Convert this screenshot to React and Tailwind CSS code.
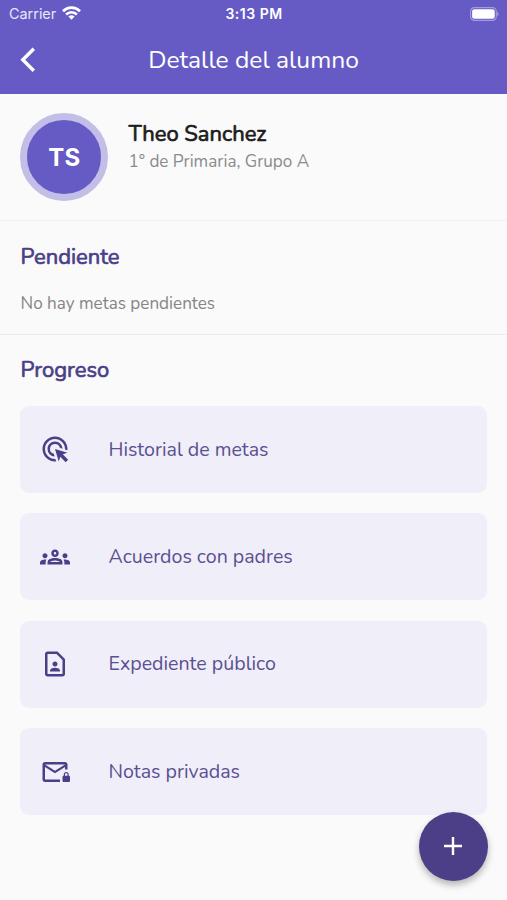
import { MdAdsClick, MdOutlineGroups, MdOutlineContactPage, MdOutlineMailLock } from "react-icons/md";

const items = [
  { label: "Historial de metas", Icon: MdAdsClick, iconClass: "mb-px" },
  { label: "Acuerdos con padres", Icon: MdOutlineGroups, iconClass: "" },
  { label: "Expediente público", Icon: MdOutlineContactPage, iconClass: "" },
  { label: "Notas privadas", Icon: MdOutlineMailLock, iconClass: "" },
];

function StatusBar() {
  return (
    <div className="grid h-[27px] grid-cols-3 items-center pl-[9px] pr-[8px] font-['Inter','Liberation_Sans',sans-serif] text-white">
      <div className="flex items-center gap-[6px] pt-px text-[14.4px] text-white/85">
        <span>Carrier</span>
        <svg className="mb-[2px] h-[14px] w-[19px]" viewBox="0 0 19 14" fill="none" stroke="white" strokeWidth="2.7">
          <path d="M1 5.2C5.8.5 13.2.5 18 5.2" />
          <path d="M4.1 8.4c3.1-2.9 7.7-2.9 10.8 0" />
          <path d="M9.5 13.7 6.4 10.5c1.8-1.6 4.4-1.6 6.2 0Z" fill="white" stroke="none" />
        </svg>
      </div>
      <span className="text-center text-[14px] font-semibold tracking-[0.5px]">3:13 PM</span>
      <svg className="h-[14px] w-[29px] justify-self-end" viewBox="0 0 30 14" preserveAspectRatio="none">
        <rect x="0.6" y="0.6" width="26.6" height="12.8" rx="4" fill="none" stroke="white" strokeOpacity="0.4" strokeWidth="1.2" />
        <rect x="2.2" y="2.2" width="23.4" height="9.6" rx="2.2" fill="white" />
        <path d="M28.3 4.8c1.7.7 1.7 3.7 0 4.4Z" fill="white" fillOpacity="0.5" />
      </svg>
    </div>
  );
}

function SectionTitle({ children }) {
  return (
    <h2 className="text-[22px] leading-[30px] text-[#4b3f87] [-webkit-text-stroke:0.7px_#4b3f87]">{children}</h2>
  );
}

export default function App() {
  return (
    <div className="relative flex h-[900px] w-[507px] flex-col overflow-hidden bg-[#fafafa] font-['Nunito','Lato',sans-serif]">
      <header className="h-[94px] shrink-0 bg-[#665bc4] text-white">
        <StatusBar />
        <div className="grid h-[66px] grid-cols-[60px_1fr_60px] items-center">
          <svg className="ml-[20px] h-[26px] w-[16px]" viewBox="0 0 16 26" fill="none" stroke="white" strokeWidth="3.4">
            <path d="M13.8 1.8 2.8 12.8l11 11" />
          </svg>
          <h1 className="text-center text-[24.6px] leading-[30px]">Detalle del alumno</h1>
        </div>
      </header>

      <section className="flex h-[127px] shrink-0 gap-5 border-b border-[#efefef] pl-[20.4px] pt-[19px]">
        <div className="flex size-[88px] items-center justify-center rounded-full border-[7px] border-[#c3bee7] bg-[#665bc4] pt-px font-['Inter',sans-serif] text-[24px] font-bold tracking-[0.2px] text-white">
          TS
        </div>
        <div className="pt-[6px]">
          <h2 className="text-[22px] leading-[30px] text-[#1c1c1c] [-webkit-text-stroke:0.7px_#1c1c1c]">Theo Sanchez</h2>
          <p className="mt-px text-[17.1px] leading-[24px] text-[#8b8b8b]">1° de Primaria, Grupo A</p>
        </div>
      </section>

      <section className="h-[114px] shrink-0 border-b border-[#ececec] px-[20.5px] pt-[21px]">
        <SectionTitle>Pendiente</SectionTitle>
        <p className="mt-5 text-[17.1px] leading-[24px] text-[#858585]">No hay metas pendientes</p>
      </section>

      <section className="flex flex-col px-5 pt-[20px]">
        <div className="pl-[0.5px]">
          <SectionTitle>Progreso</SectionTitle>
        </div>
        <div className="mt-[21px] flex flex-col gap-[20.3px]">
          {items.map(({ label, Icon, iconClass }) => (
            <button key={label} className="flex h-[87.1px] items-center rounded-[9px] bg-[#f0eef9] pl-5 text-left">
              <Icon className={`size-[30px] text-[#4b3f87] ${iconClass}`} />
              <span className="ml-[38.5px] text-[19.6px] leading-[28px] text-[#5b5093]">{label}</span>
            </button>
          ))}
        </div>
      </section>

      <button className="absolute left-[418.5px] top-[811.5px] flex size-[69px] items-center justify-center rounded-full bg-[#4c3f87] shadow-[0_4px_7px_rgba(0,0,0,0.28)]">
        <svg className="size-[18px]" viewBox="0 0 18 18" stroke="white" strokeWidth="2.4">
          <path d="M9 0v18M0 9h18" />
        </svg>
      </button>
    </div>
  );
}
